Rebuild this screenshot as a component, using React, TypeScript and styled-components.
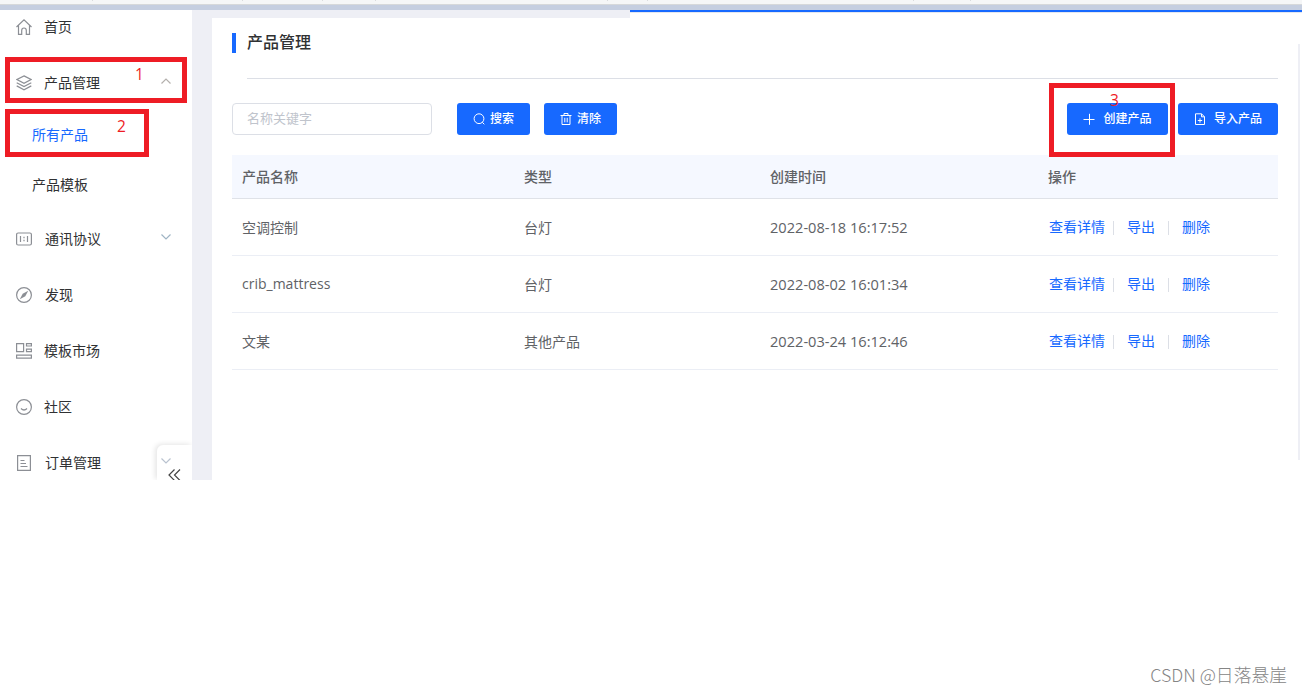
import React from "react";
import styled, { createGlobalStyle } from "styled-components";

const Global = createGlobalStyle`
  * { box-sizing: border-box; }
  body {
    margin: 0;
    background: #fff;
    color: #303133;
    font-family: "Noto Sans CJK SC", "Open Sans", sans-serif;
    font-size: 14px;
  }
`;

const Page = styled.div`
  position: relative;
  width: 1302px;
  height: 694px;
  overflow: hidden;
`;

const BrowserStrip = styled.div`
  height: 10px;
  background: #c5cee0;
`;

const TabEdge = styled.div`
  display: flex;
  height: 5px;
  background: #f5f6f7;
  border-bottom: 1px solid #d6d8da;
`;

const Tab = styled.div<{ $width: number }>`
  width: ${(p) => p.$width}px;
  height: 1px;
  border-right: 1px solid #d9dbdd;
`;

const Shell = styled.div`
  display: flex;
  height: 470px;
`;

const Sidebar = styled.nav`
  width: 192px;
  flex: none;
  overflow: hidden;
  background: #fff;
`;

const MenuList = styled.div`
  margin-top: -11px;
`;

const MenuItem = styled.div`
  display: flex;
  align-items: center;
  height: 56px;
  padding: 0 18px 0 16px;
`;

const MenuIcon = styled.svg`
  width: 16px;
  height: 16px;
  flex: none;
  fill: none;
  stroke: #8c8f95;
  stroke-width: 1.2;
`;

const MenuLabel = styled.span<{ $inset?: number }>`
  flex: 1;
  margin-left: ${(p) => p.$inset ?? 12}px;
  padding-bottom: 2px;
  line-height: 20px;
  color: #303133;
`;

const Chevron = styled.svg<{ $blue?: boolean }>`
  width: 12px;
  height: 8px;
  margin-top: -4px;
  margin-right: 2px;
  fill: none;
  stroke: ${(p) => (p.$blue ? "#9fb4c4" : "#b4b0ad")};
  stroke-width: 1.2;
`;

const SubMenu = styled.div`
  height: 100px;
  margin: -2px 0 2px;
`;

const SubItem = styled.div<{ $active?: boolean }>`
  display: flex;
  align-items: center;
  height: 50px;
  padding-left: 32px;
  line-height: 20px;
  color: ${(p) => (p.$active ? "#1769ff" : "#303133")};
`;

const CollapseTab = styled.div`
  position: absolute;
  left: 157px;
  top: 445px;
  width: 35px;
  height: 35px;
  background: #fff;
  border-radius: 6px 0 0 0;
  box-shadow: -2px -1px 5px rgba(0, 0, 0, 0.1);
  clip-path: inset(-8px 0 0 -8px);
  svg { display: block; fill: none; }
`;

const Main = styled.main`
  display: flex;
  flex: 1;
  padding: 8px 0 0 20px;
  background: linear-gradient(#eeeff5, #eeeff5) no-repeat 0 0 / 438px 100%;
`;

const Panel = styled.section`
  flex: 1;
  padding: 15px 24px 0 20px;
  background: #fff;
`;

const LoadingBar = styled.div`
  position: absolute;
  top: 10px;
  left: 630px;
  right: 0;
  height: 3px;
  background: #1769ff;
  border-bottom: 1px solid #e4e7ef;
`;

const ScrollTrack = styled.div`
  position: absolute;
  top: 44px;
  left: 1298px;
  width: 2px;
  height: 416px;
  background: #eeeff5;
`;

const Title = styled.h1`
  height: 20px;
  margin: 0;
  padding-left: 11px;
  border-left: 4px solid #1769ff;
  font-size: 16px;
  font-weight: 500;
  line-height: 16px;
  color: #303133;
`;

const Divider = styled.div`
  height: 1px;
  margin: 25px 0 24px 15px;
  background: #dcdfe6;
`;

const Toolbar = styled.div`
  display: flex;
  height: 32px;
`;

const SearchInput = styled.input`
  width: 200px;
  height: 32px;
  margin-right: 25px;
  padding: 0 14px 4px;
  border: 1px solid #dcdfe6;
  border-radius: 4px;
  outline: 0;
  font: 13px "Noto Sans CJK SC", sans-serif;
  &::placeholder { color: #c0c4cc; }
`;

const Button = styled.button<{ $width: number; $gap: number; $after?: number; $end?: boolean }>`
  display: flex;
  align-items: center;
  justify-content: center;
  gap: ${(p) => p.$gap}px;
  width: ${(p) => p.$width}px;
  height: 32px;
  margin-right: ${(p) => p.$after ?? 0}px;
  margin-left: ${(p) => (p.$end ? "auto" : "0")};
  padding: 0 0 2px;
  border: 0;
  border-radius: 3px;
  background: #1769ff;
  color: #fff;
  font: 500 12px/18px "Noto Sans CJK SC", sans-serif;
  svg { width: 12px; height: 12px; margin-top: 1px; fill: none; stroke: #fff; }
`;

const Table = styled.div`
  margin-top: 20px;
`;

const Row = styled.div<{ $head?: boolean }>`
  display: grid;
  grid-template-columns: 282px 246px 278px 1fr;
  align-items: center;
  height: ${(p) => (p.$head ? 44 : 57)}px;
  border-bottom: 1px solid ${(p) => (p.$head ? "#dfe2e8" : "#ebeef5")};
  background: ${(p) => (p.$head ? "#f5f8ff" : "#fff")};
  color: #606266;
  font-weight: ${(p) => (p.$head ? 500 : 400)};
`;

const Cell = styled.div`
  padding: 0 10px 1px;
  line-height: 20px;
`;

const Latin = styled.span<{ $size: number }>`
  display: block;
  padding-top: 1px;
  font-family: "Open Sans", sans-serif;
  font-size: ${(p) => p.$size}px;
`;

const Actions = styled.div`
  display: flex;
  align-items: center;
  padding: 0 0 2px 11px;
  line-height: 20px;
`;

const Action = styled.a`
  color: #1769ff;
`;

const Separator = styled.i<{ $before: number; $after: number }>`
  width: 1px;
  height: 14px;
  margin: 3px ${(p) => p.$after}px 0 ${(p) => p.$before}px;
  background: #dcdfe6;
`;

const Callout = styled.div<{ $x: number; $y: number; $w: number; $h: number }>`
  position: absolute;
  left: ${(p) => p.$x}px;
  top: ${(p) => p.$y}px;
  width: ${(p) => p.$w}px;
  height: ${(p) => p.$h}px;
  border: 5px solid #ee1c25;
`;

const CalloutNumber = styled.span<{ $x: number; $y: number }>`
  position: absolute;
  left: ${(p) => p.$x}px;
  top: ${(p) => p.$y}px;
  color: #ee1c25;
  font: 15.5px/20px "Open Sans", sans-serif;
`;

const Watermark = styled.div`
  position: absolute;
  right: 15px;
  bottom: 8px;
  color: #858585;
  font: 300 17.8px/24px "Noto Sans CJK SC", sans-serif;
  white-space: nowrap;
`;

const HomeIcon = () => (
  <MenuIcon viewBox="0 0 16 16">
    <path d="M.5 8 8 .9 15.500 8M2.500 6.400v9h3.200v-4Q5.700 9 8 9T10.300 11.400v4h3.200v-9" />
  </MenuIcon>
);
const LayersIcon = () => (
  <MenuIcon viewBox="0 0 16 16">
    <path d="M8 .9 15 4.500 8 8.200 1 4.500zM.7 7.700 8 11.500l7.300-3.800M.7 10.900 8 14.700l7.300-3.800" />
  </MenuIcon>
);
const ProtocolIcon = () => (
  <MenuIcon viewBox="0 0 16 16">
    <rect x=".6" y="2" width="14.800" height="12" rx="1.500" />
    <path d="M4.500 5v6M11.500 5v6M8 5.700v1.600M8 8.700v1.600" />
  </MenuIcon>
);
const CompassIcon = () => (
  <MenuIcon viewBox="0 0 16 16">
    <circle cx="8" cy="8" r="7.400" />
    <path d="M12.200 3.800 9.300 9.300l-5.500 2.900L6.700 6.700z" fill="#8c8f95" stroke="none" />
  </MenuIcon>
);
const MarketIcon = () => (
  <MenuIcon viewBox="0 0 16 16">
    <path d="M.6.600h7v8h-7zM10.500.600h4.900v2.400h-4.900zM10.500 6.200h4.900v2.400h-4.900zM.6 12.200h14.800v2.900H.6z" />
  </MenuIcon>
);
const SmileIcon = () => (
  <MenuIcon viewBox="0 0 16 16">
    <circle cx="8" cy="8" r="7.400" />
    <path d="M5 9.500Q8 12.500 11 9.500" />
  </MenuIcon>
);
const OrderIcon = () => (
  <MenuIcon viewBox="0 0 16 16">
    <path d="M1.600.600h12.800v14.800H1.600zM4.500 5.500h4M4.500 8.500h5.500M4.500 11.500h7" />
  </MenuIcon>
);

const records = [
  { name: "空调控制", kind: "台灯", created: "2022-08-18 16:17:52" },
  { name: "crib_mattress", latin: true, kind: "台灯", created: "2022-08-02 16:01:34" },
  { name: "文某", kind: "其他产品", created: "2022-03-24 16:12:46" },
];

const tabWidths = [93, 150, 80, 53, 232, 40, 266, 57];

export default function App() {
  return (
    <Page>
      <Global />
      <BrowserStrip>
        <TabEdge>
          {tabWidths.map((w, i) => <Tab key={i} $width={w} />)}
        </TabEdge>
      </BrowserStrip>
      <Shell>
        <Sidebar>
          <MenuList>
            <MenuItem><HomeIcon /><MenuLabel>首页</MenuLabel></MenuItem>
            <MenuItem>
              <LayersIcon /><MenuLabel>产品管理</MenuLabel>
              <Chevron viewBox="0 0 12 8"><path d="m1.500 6.500 4.500-4.500 4.500 4.500" /></Chevron>
            </MenuItem>
            <SubMenu>
              <SubItem $active>所有产品</SubItem>
              <SubItem>产品模板</SubItem>
            </SubMenu>
            <MenuItem>
              <ProtocolIcon /><MenuLabel $inset={13}>通讯协议</MenuLabel>
              <Chevron $blue viewBox="0 0 12 8"><path d="m1.500 1.500 4.500 4.500 4.500-4.500" /></Chevron>
            </MenuItem>
            <MenuItem><CompassIcon /><MenuLabel $inset={13}>发现</MenuLabel></MenuItem>
            <MenuItem><MarketIcon /><MenuLabel>模板市场</MenuLabel></MenuItem>
            <MenuItem><SmileIcon /><MenuLabel>社区</MenuLabel></MenuItem>
            <MenuItem><OrderIcon /><MenuLabel $inset={13}>订单管理</MenuLabel></MenuItem>
          </MenuList>
        </Sidebar>
        <Main>
          <Panel>
            <Title>产品管理</Title>
            <Divider />
            <Toolbar>
              <SearchInput placeholder="名称关键字" />
              <Button $width={73} $gap={5} $after={14}>
                <svg viewBox="0 0 12 12"><circle cx="6" cy="5.700" r="4.900" /><path d="m9.300 9.300 2 2" /></svg>
                搜索
              </Button>
              <Button $width={73} $gap={5}>
                <svg viewBox="0 0 12 12"><path d="M.5 2.500h11M4 2.500v-2h4v2M2 2.500v9h8v-9M4.800 4.800v4.500M7.200 4.800v4.500" /></svg>
                清除
              </Button>
              <Button $width={101} $gap={8} $after={10} $end>
                <svg viewBox="0 0 12 12"><path d="M.5 6.500h11M6.500.8v11" /></svg>
                创建产品
              </Button>
              <Button $width={100} $gap={8}>
                <svg viewBox="0 0 12 12"><path d="M1.500.8h6l3 3v7.700h-9zM7.500.8v3h3M6 5.300v4.400M3.800 7.500h4.400" /></svg>
                导入产品
              </Button>
            </Toolbar>
            <Table>
              <Row $head>
                <Cell>产品名称</Cell><Cell>类型</Cell><Cell>创建时间</Cell><Cell>操作</Cell>
              </Row>
              {records.map((r) => (
                <Row key={r.created}>
                  <Cell>{r.latin ? <Latin $size={14}>{r.name}</Latin> : r.name}</Cell>
                  <Cell>{r.kind}</Cell>
                  <Cell><Latin $size={14.6}>{r.created}</Latin></Cell>
                  <Actions>
                    <Action>查看详情</Action>
                    <Separator $before={8} $after={13} />
                    <Action>导出</Action>
                    <Separator $before={13} $after={13} />
                    <Action>删除</Action>
                  </Actions>
                </Row>
              ))}
            </Table>
          </Panel>
        </Main>
      </Shell>
      <CollapseTab>
        <svg width="35" height="35" viewBox="0 0 35 35">
          <path d="m4.500 13.500 4.500 4.500 4.500-4.500" stroke="#b9c2cf" strokeWidth="1.200" />
          <path d="m17.500 24.500-5.500 5.500 5.500 5.500M23 24.500 17.500 30l5.500 5.500" stroke="#444" strokeWidth="1.200" />
        </svg>
      </CollapseTab>
      <LoadingBar />
      <ScrollTrack />
      <Callout $x={5} $y={57} $w={182} $h={46} />
      <Callout $x={5} $y={109} $w={144} $h={48} />
      <Callout $x={1049} $y={83} $w={126} $h={74} />
      <CalloutNumber $x={135} $y={64}>1</CalloutNumber>
      <CalloutNumber $x={117} $y={116}>2</CalloutNumber>
      <CalloutNumber $x={1110} $y={90}>3</CalloutNumber>
      <Watermark>CSDN @日落悬崖</Watermark>
    </Page>
  );
}
